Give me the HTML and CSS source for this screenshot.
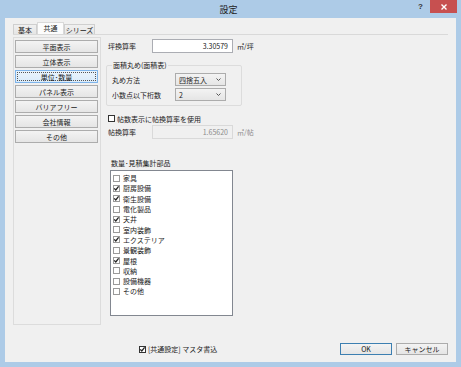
FILE: index.html
```html
<!DOCTYPE html>
<html lang="ja">
<head>
    <meta charset="UTF-8">
    <title>設定</title>
    <link rel="stylesheet" href="styles.css">
</head>
<body>

<div class="window">
    <!-- タイトルバー -->
    <div class="titlebar">
        <span></span>
        <span class="title">設定</span>
        <div class="controls">
            <span class="help">?</span>
            <span class="close">
                <svg width="6" height="6" viewBox="0 0 6 6"><path d="M0.5 0.5 L5.5 5.5 M5.5 0.5 L0.5 5.5" stroke="#fff" stroke-width="1.4"/></svg>
            </span>
        </div>
    </div>

    <div class="client">
        <div class="tabs">
            <span class="tab tab-kihon">基本</span>
            <span class="tab tab-kyoutsu active">共通</span>
            <span class="tab tab-series">シリーズ</span>
        </div>

        <div class="panel">
            <!-- 左のメニュー -->
            <div class="side">
                <button type="button" class="side-btn">平面表示</button>
                <button type="button" class="side-btn">立体表示</button>
                <button type="button" class="side-btn selected"><span class="focus">単位･数量</span></button>
                <button type="button" class="side-btn">パネル表示</button>
                <button type="button" class="side-btn">バリアフリー</button>
                <button type="button" class="side-btn">会社情報</button>
                <button type="button" class="side-btn">その他</button>
            </div>

            <!-- 右の設定 -->
            <div class="main">
                <div class="row">
                    <span class="row-label">坪換算率</span>
                    <span class="field">3.30579</span>
                    <span class="unit">㎡/坪</span>
                </div>

                <fieldset class="group">
                    <legend>面積丸め(面積表)</legend>
                    <div class="frow">
                        <span class="frow-label">丸め方法</span>
                        <span class="select">四捨五入<svg width="5" height="3" viewBox="0 0 5 3"><polyline points="0.5,0.5 2.5,2.5 4.5,0.5" fill="none" stroke="#555" stroke-width="1"/></svg></span>
                    </div>
                    <div class="frow">
                        <span class="frow-label">小数点以下桁数</span>
                        <span class="select">2<svg width="5" height="3" viewBox="0 0 5 3"><polyline points="0.5,0.5 2.5,2.5 4.5,0.5" fill="none" stroke="#555" stroke-width="1"/></svg></span>
                    </div>
                </fieldset>

                <div class="check-row">
                    <span class="cb dark"></span>
                    <span>帖数表示に帖換算率を使用</span>
                </div>

                <div class="row row-jou">
                    <span class="row-label">帖換算率</span>
                    <span class="field disabled">1.65620</span>
                    <span class="unit disabled-text">㎡/帖</span>
                </div>

                <div class="list-label">数量･見積集計部品</div>
                <div class="list">
                    <div class="item"><span class="cb"></span>家具</div>
                    <div class="item"><span class="cb checked"><svg width="7" height="7" viewBox="0 0 7 7"><polyline points="1.2,3.4 2.8,5 5.6,1.4" fill="none" stroke="#222" stroke-width="1.3"/></svg></span>厨房設備</div>
                    <div class="item"><span class="cb checked"><svg width="7" height="7" viewBox="0 0 7 7"><polyline points="1.2,3.4 2.8,5 5.6,1.4" fill="none" stroke="#222" stroke-width="1.3"/></svg></span>衛生設備</div>
                    <div class="item"><span class="cb"></span>電化製品</div>
                    <div class="item"><span class="cb checked"><svg width="7" height="7" viewBox="0 0 7 7"><polyline points="1.2,3.4 2.8,5 5.6,1.4" fill="none" stroke="#222" stroke-width="1.3"/></svg></span>天井</div>
                    <div class="item"><span class="cb"></span>室内装飾</div>
                    <div class="item"><span class="cb checked"><svg width="7" height="7" viewBox="0 0 7 7"><polyline points="1.2,3.4 2.8,5 5.6,1.4" fill="none" stroke="#222" stroke-width="1.3"/></svg></span>エクステリア</div>
                    <div class="item"><span class="cb"></span>景観装飾</div>
                    <div class="item"><span class="cb checked"><svg width="7" height="7" viewBox="0 0 7 7"><polyline points="1.2,3.4 2.8,5 5.6,1.4" fill="none" stroke="#222" stroke-width="1.3"/></svg></span>屋根</div>
                    <div class="item"><span class="cb"></span>収納</div>
                    <div class="item"><span class="cb"></span>設備機器</div>
                    <div class="item"><span class="cb"></span>その他</div>
                </div>
            </div>
        </div>

        <!-- 下のボタン -->
        <div class="footer">
            <div class="check-row footer-check">
                <span class="cb dark checked"><svg width="7" height="7" viewBox="0 0 7 7"><polyline points="1.2,3.4 2.8,5 5.6,1.4" fill="none" stroke="#222" stroke-width="1.3"/></svg></span>
                <span>[共通設定] マスタ書込</span>
            </div>
            <button type="button" class="btn default">OK</button>
            <button type="button" class="btn">キャンセル</button>
        </div>
    </div>
</div>

</body>
</html>
```

FILE: styles.css
```css
body {
    margin: 0;
    font-family: "Noto Sans CJK JP", "Noto Sans", sans-serif;
    font-size: 7px;
    color: #1a1a1a;
}
.window {
    width: 461px;
    height: 367px;
    box-sizing: border-box;
    padding: 0 5px 5px;
    background-color: #adcbe7;
    display: flex;
    flex-direction: column;
}

/* タイトルバー */
.titlebar {
    height: 18px;
    margin: 0 -5px;
    padding-right: 4px;
    display: grid;
    grid-template-columns: 1fr auto 1fr;
}
.title {
    font-size: 9px;
    line-height: 20px;
    color: #222;
}
.controls {
    display: flex;
    justify-content: flex-end;
    align-items: flex-start;
}
.help {
    font-family: "Liberation Sans", sans-serif;
    font-weight: bold;
    font-size: 8px;
    line-height: 13px;
    margin-right: 7px;
    color: #333;
}
.close {
    width: 27px;
    height: 13px;
    background-color: #c75050;
    display: flex;
    align-items: center;
    justify-content: center;
}

.client {
    flex: 1;
    background-color: #f0f0f0;
    padding: 0 8px 7px;
    display: flex;
    flex-direction: column;
}

/* タブ */
.tabs {
    height: 16px;
    display: flex;
    align-items: flex-end;
}
.tab {
    height: 10px;
    line-height: 10px;
    box-sizing: border-box;
    border: 1px solid #cfcfcf;
    border-bottom: none;
    background: linear-gradient(#f0f0f0, #e5e5e5);
    text-align: center;
}
.tab-kihon { width: 24px; }
.tab-kyoutsu { width: 27px; }
.tab-series { width: 31px; }
.tab.active {
    height: 12px;
    line-height: 11px;
    background: #fcfcfc;
    border-color: #d9d9d9;
}

.panel {
    border-top: 1px solid #d9d9d9;
    padding-top: 2px;
    display: flex;
    gap: 5px;
}

/* 左メニュー */
.side {
    width: 88px;
    height: 288px;
    box-sizing: border-box;
    border: 1px solid #dcdcdc;
    padding: 2px 2px 0 1px;
    display: flex;
    flex-direction: column;
    gap: 2px;
}
.side-btn, .btn {
    height: 13px;
    padding: 0;
    font-family: inherit;
    font-size: 7px;
    color: #1a1a1a;
    border: 1px solid #acacac;
    background: linear-gradient(#f3f3f3, #e5e5e5);
    display: flex;
    align-items: center;
    justify-content: center;
}
.side-btn.selected {
    background: linear-gradient(#eaf4fc, #dbecfb);
    border-color: #7eb4ea;
    padding: 1px;
}
.focus {
    flex: 1;
    align-self: stretch;
    display: flex;
    align-items: center;
    justify-content: center;
    border: 1px dotted #555;
}

/* 右側 */
.main {
    padding-top: 2px;
    display: flex;
    flex-direction: column;
}
.row {
    height: 14px;
    padding-left: 2px;
    display: flex;
    align-items: center;
}
.row-label {
    width: 44px;
}
.field {
    width: 81px;
    height: 14px;
    box-sizing: border-box;
    border: 1px solid #abadb3;
    background-color: #fff;
    padding-right: 4px;
    text-align: right;
    line-height: 12px;
}
.field.disabled {
    background-color: #f0f0f0;
    border-color: #d9d9d9;
    color: #8c8c8c;
}
.unit {
    margin-left: 4px;
}
.disabled-text {
    color: #8c8c8c;
}

.group {
    width: 136px;
    box-sizing: border-box;
    margin: 8px 0 0;
    padding: 0 5px 4px;
    border: 1px solid #dcdcdc;
    border-radius: 2px;
}
.group legend {
    padding: 0 1px;
    line-height: 8px;
}
.frow {
    height: 13px;
    margin-top: 2px;
    display: flex;
    align-items: center;
}
.frow:first-of-type {
    margin-top: 4px;
}
.frow-label {
    width: 63px;
}
.select {
    width: 51px;
    height: 13px;
    box-sizing: border-box;
    border: 1px solid #acacac;
    background: linear-gradient(#f3f3f3, #e5e5e5);
    padding: 0 4px 0 3px;
    display: flex;
    align-items: center;
    justify-content: space-between;
}

.check-row {
    height: 9px;
    margin-top: 8px;
    padding-left: 2px;
    display: flex;
    align-items: center;
    gap: 2px;
}
.row-jou {
    margin-top: 2px;
}
.cb {
    width: 7px;
    height: 7px;
    box-sizing: border-box;
    border: 1px solid #9a9a9a;
    background-color: #fff;
    display: inline-flex;
    position: relative;
    flex-shrink: 0;
}
.cb.dark {
    border-color: #333;
}
.cb svg {
    position: absolute;
    left: -1px;
    top: -1px;
}

.list-label {
    margin: 20px 0 0 5px;
    line-height: 9px;
}
.list {
    width: 123px;
    height: 146px;
    box-sizing: border-box;
    margin: 2px 0 0 4px;
    border: 1px solid #828790;
    background-color: #fff;
    padding: 2px 0 0 2px;
}
.item {
    height: 10.3px;
    display: flex;
    align-items: center;
    gap: 3px;
}

/* 下のボタン */
.footer {
    margin-top: auto;
    padding-left: 126px;
    display: flex;
    align-items: center;
    gap: 4px;
}
.footer-check {
    margin: 0 auto 0 0;
    padding: 0;
}
.btn {
    width: 52px;
    height: 12px;
}
.btn.default {
    border-color: #3c7fb1;
}
```
